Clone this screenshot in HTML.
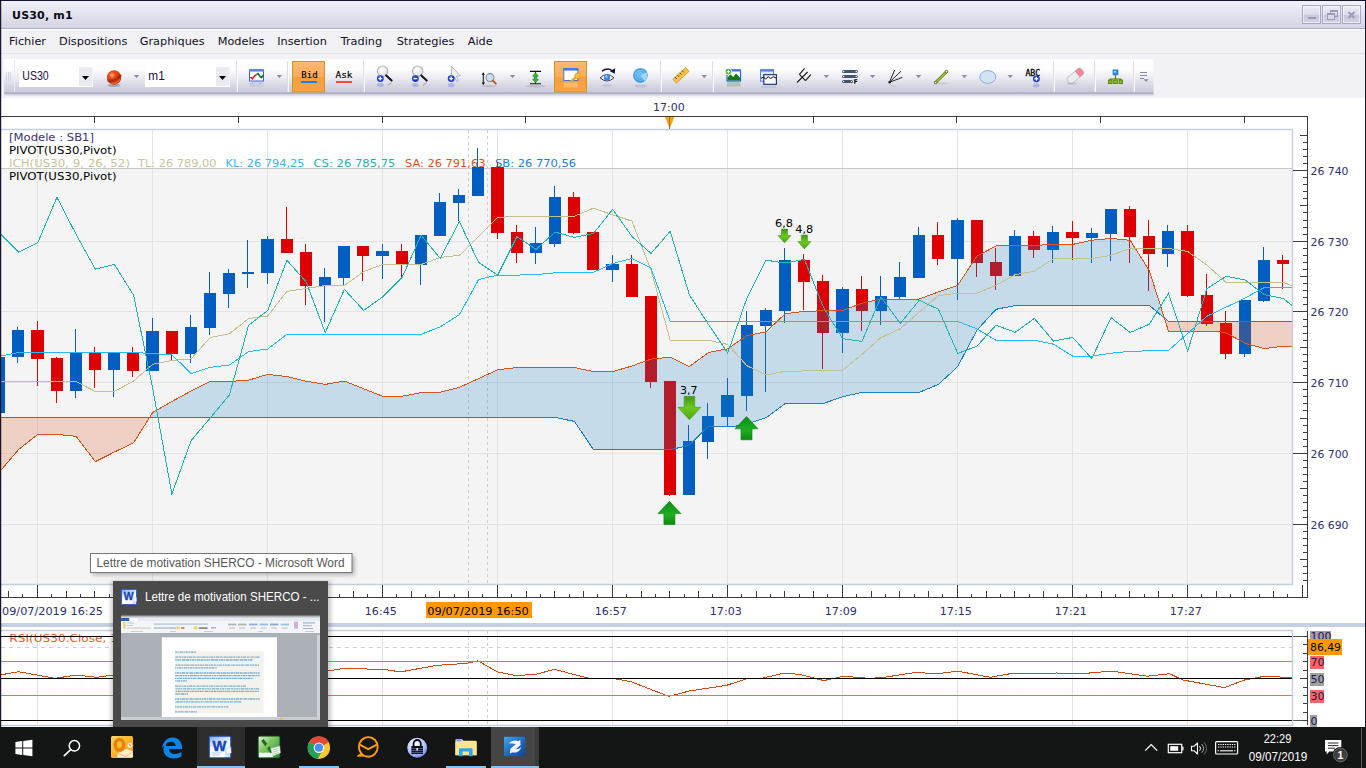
<!DOCTYPE html><html lang="fr"><head><meta charset="utf-8"><title>US30, m1</title><style>
*{box-sizing:border-box;margin:0;padding:0}
html,body{width:1366px;height:768px;overflow:hidden;background:#fff}
body{position:relative;font-family:"DejaVu Sans","Liberation Sans",sans-serif;font-size:11px;color:#000}
.abs{position:absolute}
#frameT{left:0;top:0;width:1366px;height:1px;background:#15152b}
#frameL{left:0;top:0;width:1px;height:728px;background:#15152b;box-shadow:1px 0 0 rgba(21,21,43,.22)}
#frameR{left:1365px;top:0;width:1px;height:728px;background:#15152b}
#title{left:1px;top:1px;width:1364px;height:28px;background:linear-gradient(#f1f1f8,#e4e4ef 45%,#d3d3e3);border-bottom:1px solid #a9adc9}
#title b{position:absolute;left:11px;top:8px;font-size:11px;font-weight:bold;color:#0a0a14;white-space:nowrap;letter-spacing:0.2px}
.wb{position:absolute;top:4px;width:19px;height:19px;border:1px solid #a6a8c6;background:linear-gradient(#ececf6,#dcdcec 50%,#c6c6dc 52%,#d2d2e4);box-shadow:inset 0 0 0 1px rgba(255,255,255,.55)}
#menu{left:1px;top:29px;width:1364px;height:25px;background:#f1f1f6;border-top:1px solid #fff;border-bottom:1px solid #e4e4ec}
#menu span{position:absolute;top:5px;font-size:11.3px;color:#14101c;white-space:nowrap}
#tbarea{left:1px;top:54px;width:1364px;height:44px;background:#f1f1f6}
#toolbar{left:4px;top:58px;width:1150px;height:35px;background:linear-gradient(#ffffff,#f4f4f9 40%,#dcdce8 75%,#cdcddd);border-radius:2px;box-shadow:0 1px 0 #9c9cb8,0 2px 2px rgba(120,120,160,.45);}
</style></head><body>
<svg id="chart" width="1366" height="768" viewBox="0 0 1366 768" style="position:absolute;left:0;top:0">
<defs>
<clipPath id="cpB"><rect x="149.6" y="130" width="1014.7" height="455"/></clipPath>
<clipPath id="cpR"><rect x="1" y="130" width="148.6" height="455"/><rect x="1164.2" y="130" width="128.3" height="455"/></clipPath>
<clipPath id="cpPanel"><rect x="1" y="130" width="1291.5" height="455"/></clipPath>
<clipPath id="cpRsi"><rect x="1" y="631" width="1291.5" height="94"/></clipPath>
<linearGradient id="gDn" x1="0" y1="0" x2="0" y2="1"><stop offset="0" stop-color="#3d9a12"/><stop offset="0.5" stop-color="#6cc81e"/><stop offset="1" stop-color="#4aa612"/></linearGradient>
<linearGradient id="gUp" x1="0" y1="0" x2="0" y2="1"><stop offset="0" stop-color="#0c8f14"/><stop offset="0.6" stop-color="#1fae22"/><stop offset="1" stop-color="#0a8a10"/></linearGradient>
</defs>
<rect x="1" y="130" width="1292" height="39" fill="#ffffff"/>
<rect x="1" y="169" width="1292" height="416" fill="#f4f4f4"/>
<g stroke="#e3e3e3" stroke-width="1" shape-rendering="crispEdges">
<line x1="37.5" y1="130" x2="37.5" y2="585"/>
<line x1="152.5" y1="130" x2="152.5" y2="585"/>
<line x1="267.5" y1="130" x2="267.5" y2="585"/>
<line x1="382.5" y1="130" x2="382.5" y2="585"/>
<line x1="497.5" y1="130" x2="497.5" y2="585"/>
<line x1="612.5" y1="130" x2="612.5" y2="585"/>
<line x1="727.5" y1="130" x2="727.5" y2="585"/>
<line x1="842.5" y1="130" x2="842.5" y2="585"/>
<line x1="957.5" y1="130" x2="957.5" y2="585"/>
<line x1="1072.5" y1="130" x2="1072.5" y2="585"/>
<line x1="1187.5" y1="130" x2="1187.5" y2="585"/>
<line x1="1" y1="241.5" x2="1293" y2="241.5"/>
<line x1="1" y1="311.5" x2="1293" y2="311.5"/>
<line x1="1" y1="382.5" x2="1293" y2="382.5"/>
<line x1="1" y1="453.5" x2="1293" y2="453.5"/>
<line x1="1" y1="524.5" x2="1293" y2="524.5"/>
</g>
<line x1="1" y1="168.5" x2="1293" y2="168.5" stroke="#c8c8c8" shape-rendering="crispEdges"/>
<g stroke="#d0d0d0" stroke-dasharray="3 3" shape-rendering="crispEdges"><line x1="468.5" y1="130" x2="468.5" y2="585"/><line x1="487.5" y1="130" x2="487.5" y2="585"/></g>
<g font-family="DejaVu Sans, Liberation Sans, sans-serif" font-size="11px">
<text x="9" y="141" fill="#3c3470" textLength="85" lengthAdjust="spacingAndGlyphs">[Modele : SB1]</text>
<text x="9" y="154" fill="#000" textLength="107.5" lengthAdjust="spacingAndGlyphs">PIVOT(US30,Pivot)</text>
<text x="9" y="167" fill="#c9c596" textLength="121" lengthAdjust="spacingAndGlyphs">ICH(US30, 9, 26, 52)</text>
<text x="138" y="167" fill="#c9c596" textLength="78.5" lengthAdjust="spacingAndGlyphs">TL: 26 789,00</text>
<text x="225.5" y="167" fill="#35b8f0" textLength="79" lengthAdjust="spacingAndGlyphs">KL: 26 794,25</text>
<text x="313.5" y="167" fill="#22b3b3" textLength="82" lengthAdjust="spacingAndGlyphs">CS: 26 785,75</text>
<text x="405" y="167" fill="#e2501c" textLength="80.5" lengthAdjust="spacingAndGlyphs">SA: 26 791,63</text>
<text x="495" y="167" fill="#2080d0" textLength="81" lengthAdjust="spacingAndGlyphs">SB: 26 770,56</text>
<text x="9" y="180" fill="#000" textLength="107.5" lengthAdjust="spacingAndGlyphs">PIVOT(US30,Pivot)</text>
</g>
<g clip-path="url(#cpPanel)">
<g shape-rendering="crispEdges">
<rect x="-2" y="357.2" width="1" height="55.7" fill="#005ec0"/>
<rect x="-7" y="357.2" width="12" height="55.7" fill="#005ec0"/>
<rect x="17" y="326.8" width="1" height="36.0" fill="#005ec0"/>
<rect x="12" y="330.0" width="12" height="26.6" fill="#005ec0"/>
<rect x="37" y="321.0" width="1" height="64.9" fill="#dc0000"/>
<rect x="31" y="330.0" width="13" height="28.7" fill="#dc0000"/>
<rect x="56" y="357.2" width="1" height="45.6" fill="#dc0000"/>
<rect x="51" y="358.1" width="12" height="32.9" fill="#dc0000"/>
<rect x="75" y="329.0" width="1" height="68.7" fill="#005ec0"/>
<rect x="70" y="352.9" width="12" height="38.1" fill="#005ec0"/>
<rect x="94" y="346.9" width="1" height="40.9" fill="#dc0000"/>
<rect x="89" y="352.9" width="12" height="17.1" fill="#dc0000"/>
<rect x="113" y="352.9" width="1" height="44.1" fill="#005ec0"/>
<rect x="108" y="352.9" width="12" height="17.1" fill="#005ec0"/>
<rect x="132" y="346.9" width="1" height="30.0" fill="#dc0000"/>
<rect x="127" y="352.9" width="12" height="18.0" fill="#dc0000"/>
<rect x="152" y="318.2" width="1" height="52.7" fill="#005ec0"/>
<rect x="146" y="331.1" width="13" height="39.8" fill="#005ec0"/>
<rect x="171" y="331.1" width="1" height="28.9" fill="#dc0000"/>
<rect x="166" y="331.1" width="12" height="22.7" fill="#dc0000"/>
<rect x="190" y="315.0" width="1" height="47.8" fill="#005ec0"/>
<rect x="185" y="327.0" width="12" height="26.8" fill="#005ec0"/>
<rect x="209" y="271.9" width="1" height="62.8" fill="#005ec0"/>
<rect x="204" y="292.9" width="12" height="34.9" fill="#005ec0"/>
<rect x="228" y="269.1" width="1" height="38.8" fill="#005ec0"/>
<rect x="223" y="272.8" width="12" height="21.0" fill="#005ec0"/>
<rect x="247" y="240.2" width="1" height="47.4" fill="#005ec0"/>
<rect x="242" y="272.0" width="12" height="1.8" fill="#005ec0"/>
<rect x="267" y="236.0" width="1" height="47.8" fill="#005ec0"/>
<rect x="261" y="239.1" width="13" height="33.8" fill="#005ec0"/>
<rect x="286" y="207.3" width="1" height="45.5" fill="#dc0000"/>
<rect x="281" y="239.1" width="12" height="13.7" fill="#dc0000"/>
<rect x="305" y="244.4" width="1" height="60.4" fill="#dc0000"/>
<rect x="300" y="252.1" width="12" height="33.7" fill="#dc0000"/>
<rect x="324" y="268.2" width="1" height="53.6" fill="#005ec0"/>
<rect x="319" y="277.0" width="12" height="8.8" fill="#005ec0"/>
<rect x="343" y="245.9" width="1" height="39.7" fill="#005ec0"/>
<rect x="338" y="245.9" width="12" height="31.9" fill="#005ec0"/>
<rect x="362" y="245.9" width="1" height="35.1" fill="#dc0000"/>
<rect x="357" y="245.9" width="12" height="9.9" fill="#dc0000"/>
<rect x="382" y="244.4" width="1" height="34.3" fill="#005ec0"/>
<rect x="376" y="251.0" width="13" height="4.8" fill="#005ec0"/>
<rect x="401" y="244.4" width="1" height="34.3" fill="#dc0000"/>
<rect x="396" y="251.0" width="12" height="13.1" fill="#dc0000"/>
<rect x="420" y="235.0" width="1" height="49.7" fill="#005ec0"/>
<rect x="415" y="235.0" width="12" height="30.0" fill="#005ec0"/>
<rect x="439" y="193.1" width="1" height="42.8" fill="#005ec0"/>
<rect x="434" y="202.1" width="12" height="33.8" fill="#005ec0"/>
<rect x="458" y="189.0" width="1" height="32.2" fill="#005ec0"/>
<rect x="453" y="195.0" width="12" height="7.9" fill="#005ec0"/>
<rect x="477" y="147.5" width="1" height="48.3" fill="#005ec0"/>
<rect x="472" y="166.9" width="12" height="28.9" fill="#005ec0"/>
<rect x="497" y="162.2" width="1" height="76.5" fill="#dc0000"/>
<rect x="491" y="166.9" width="13" height="65.8" fill="#dc0000"/>
<rect x="516" y="225.0" width="1" height="37.9" fill="#dc0000"/>
<rect x="511" y="232.0" width="12" height="20.8" fill="#dc0000"/>
<rect x="535" y="226.9" width="1" height="36.9" fill="#005ec0"/>
<rect x="530" y="243.2" width="12" height="9.6" fill="#005ec0"/>
<rect x="554" y="186.0" width="1" height="61.0" fill="#005ec0"/>
<rect x="549" y="196.9" width="12" height="46.9" fill="#005ec0"/>
<rect x="573" y="192.2" width="1" height="41.6" fill="#dc0000"/>
<rect x="568" y="196.9" width="12" height="35.8" fill="#dc0000"/>
<rect x="592" y="232.0" width="1" height="37.7" fill="#dc0000"/>
<rect x="587" y="232.0" width="12" height="37.7" fill="#dc0000"/>
<rect x="612" y="255.0" width="1" height="26.7" fill="#005ec0"/>
<rect x="606" y="264.0" width="13" height="6.0" fill="#005ec0"/>
<rect x="631" y="255.0" width="1" height="41.8" fill="#dc0000"/>
<rect x="626" y="264.0" width="12" height="32.8" fill="#dc0000"/>
<rect x="650" y="295.9" width="1" height="91.9" fill="#dc0000"/>
<rect x="645" y="295.9" width="12" height="85.7" fill="#dc0000"/>
<rect x="669" y="380.9" width="1" height="114.8" fill="#dc0000"/>
<rect x="664" y="380.9" width="12" height="113.8" fill="#dc0000"/>
<rect x="688" y="425.0" width="1" height="69.7" fill="#005ec0"/>
<rect x="683" y="440.9" width="12" height="53.8" fill="#005ec0"/>
<rect x="707" y="402.8" width="1" height="55.9" fill="#005ec0"/>
<rect x="702" y="416.0" width="12" height="25.8" fill="#005ec0"/>
<rect x="727" y="377.9" width="1" height="48.4" fill="#005ec0"/>
<rect x="721" y="395.0" width="13" height="21.9" fill="#005ec0"/>
<rect x="746" y="310.9" width="1" height="100.0" fill="#005ec0"/>
<rect x="741" y="325.0" width="12" height="70.7" fill="#005ec0"/>
<rect x="765" y="307.9" width="1" height="83.7" fill="#005ec0"/>
<rect x="760" y="310.0" width="12" height="15.9" fill="#005ec0"/>
<rect x="784" y="247.9" width="1" height="74.6" fill="#005ec0"/>
<rect x="779" y="260.0" width="12" height="50.9" fill="#005ec0"/>
<rect x="803" y="254.0" width="1" height="55.8" fill="#dc0000"/>
<rect x="798" y="260.0" width="12" height="22.0" fill="#dc0000"/>
<rect x="822" y="275.0" width="1" height="94.0" fill="#dc0000"/>
<rect x="817" y="280.9" width="12" height="51.9" fill="#dc0000"/>
<rect x="842" y="286.9" width="1" height="66.0" fill="#005ec0"/>
<rect x="836" y="289.1" width="13" height="43.7" fill="#005ec0"/>
<rect x="861" y="276.0" width="1" height="54.9" fill="#dc0000"/>
<rect x="856" y="289.1" width="12" height="21.6" fill="#dc0000"/>
<rect x="880" y="276.0" width="1" height="48.7" fill="#005ec0"/>
<rect x="875" y="296.0" width="12" height="14.7" fill="#005ec0"/>
<rect x="899" y="261.9" width="1" height="37.1" fill="#005ec0"/>
<rect x="894" y="276.9" width="12" height="20.1" fill="#005ec0"/>
<rect x="918" y="227.2" width="1" height="50.6" fill="#005ec0"/>
<rect x="913" y="234.9" width="12" height="42.9" fill="#005ec0"/>
<rect x="937" y="221.9" width="1" height="43.2" fill="#dc0000"/>
<rect x="932" y="234.9" width="12" height="24.0" fill="#dc0000"/>
<rect x="957" y="217.8" width="1" height="82.2" fill="#005ec0"/>
<rect x="951" y="219.9" width="13" height="39.0" fill="#005ec0"/>
<rect x="976" y="219.9" width="1" height="57.0" fill="#dc0000"/>
<rect x="971" y="219.9" width="12" height="42.9" fill="#dc0000"/>
<rect x="995" y="247.8" width="1" height="42.2" fill="#dc0000"/>
<rect x="990" y="261.9" width="12" height="14.1" fill="#dc0000"/>
<rect x="1014" y="230.0" width="1" height="46.0" fill="#005ec0"/>
<rect x="1009" y="236.0" width="12" height="40.0" fill="#005ec0"/>
<rect x="1033" y="230.9" width="1" height="27.2" fill="#dc0000"/>
<rect x="1028" y="236.0" width="12" height="14.1" fill="#dc0000"/>
<rect x="1052" y="226.0" width="1" height="36.8" fill="#005ec0"/>
<rect x="1047" y="231.8" width="12" height="18.2" fill="#005ec0"/>
<rect x="1072" y="220.9" width="1" height="39.0" fill="#dc0000"/>
<rect x="1066" y="231.8" width="13" height="6.1" fill="#dc0000"/>
<rect x="1091" y="228.0" width="1" height="34.8" fill="#005ec0"/>
<rect x="1086" y="232.9" width="12" height="5.0" fill="#005ec0"/>
<rect x="1110" y="208.8" width="1" height="52.1" fill="#005ec0"/>
<rect x="1105" y="208.8" width="12" height="25.3" fill="#005ec0"/>
<rect x="1129" y="205.9" width="1" height="56.9" fill="#dc0000"/>
<rect x="1124" y="208.8" width="12" height="28.1" fill="#dc0000"/>
<rect x="1148" y="220.0" width="1" height="70.7" fill="#dc0000"/>
<rect x="1143" y="235.9" width="12" height="17.9" fill="#dc0000"/>
<rect x="1167" y="225.1" width="1" height="41.8" fill="#005ec0"/>
<rect x="1162" y="230.9" width="12" height="22.9" fill="#005ec0"/>
<rect x="1187" y="225.1" width="1" height="71.8" fill="#dc0000"/>
<rect x="1181" y="230.9" width="13" height="65.1" fill="#dc0000"/>
<rect x="1206" y="274.4" width="1" height="51.4" fill="#dc0000"/>
<rect x="1201" y="295.0" width="12" height="28.7" fill="#dc0000"/>
<rect x="1225" y="311.1" width="1" height="47.7" fill="#dc0000"/>
<rect x="1220" y="323.0" width="12" height="30.8" fill="#dc0000"/>
<rect x="1244" y="300.2" width="1" height="56.4" fill="#005ec0"/>
<rect x="1239" y="300.2" width="12" height="53.6" fill="#005ec0"/>
<rect x="1263" y="247.2" width="1" height="54.8" fill="#005ec0"/>
<rect x="1258" y="260.0" width="12" height="40.7" fill="#005ec0"/>
<rect x="1282" y="255.1" width="1" height="33.7" fill="#dc0000"/>
<rect x="1277" y="260.0" width="12" height="3.9" fill="#dc0000"/>
</g>
<polygon points="0.0,471.3 18.6,449.5 37.8,434.4 56.9,434.4 76.1,436.3 95.3,461.6 114.4,452.0 133.6,442.8 152.7,412.5 171.9,401.5 191.1,391.0 210.2,381.4 229.4,381.4 248.6,380.2 267.7,374.4 286.9,376.6 306.1,381.2 325.2,384.4 344.4,381.1 363.6,388.7 382.7,396.3 401.9,396.3 421.1,392.6 440.2,392.1 459.4,387.3 478.6,378.6 497.7,369.8 516.9,367.5 574.4,367.5 593.5,371.6 612.7,371.6 631.9,366.0 651.0,359.1 670.2,357.2 689.4,366.6 708.5,352.5 727.7,348.8 746.9,335.6 766.0,331.9 785.2,313.7 804.4,311.3 823.5,310.8 842.7,310.5 861.9,303.2 881.0,299.0 919.3,299.0 938.5,291.9 957.7,285.3 976.8,256.3 996.0,245.9 1072.7,244.4 1091.8,240.2 1111.0,238.4 1130.2,240.3 1149.3,270.6 1168.5,331.2 1206.8,331.2 1216.0,331.2 1226.0,332.8 1245.2,343.4 1264.3,348.5 1283.5,346.3 1292.5,346.3 1292.5,321.3 1168.5,321.3 1149.3,305.4 1015.2,305.5 996.0,309.3 976.8,330.4 957.7,366.6 938.5,384.4 919.3,392.3 861.9,392.3 842.7,396.8 823.5,403.4 785.2,403.4 766.0,417.8 746.9,424.0 735.0,426.3 708.5,426.3 689.4,445.0 680.6,447.3 670.2,449.7 593.5,449.6 574.4,421.4 555.2,417.5 0.0,417.5" fill="#1e83c8" fill-opacity="0.22" clip-path="url(#cpB)"/>
<polygon points="0.0,471.3 18.6,449.5 37.8,434.4 56.9,434.4 76.1,436.3 95.3,461.6 114.4,452.0 133.6,442.8 152.7,412.5 171.9,401.5 191.1,391.0 210.2,381.4 229.4,381.4 248.6,380.2 267.7,374.4 286.9,376.6 306.1,381.2 325.2,384.4 344.4,381.1 363.6,388.7 382.7,396.3 401.9,396.3 421.1,392.6 440.2,392.1 459.4,387.3 478.6,378.6 497.7,369.8 516.9,367.5 574.4,367.5 593.5,371.6 612.7,371.6 631.9,366.0 651.0,359.1 670.2,357.2 689.4,366.6 708.5,352.5 727.7,348.8 746.9,335.6 766.0,331.9 785.2,313.7 804.4,311.3 823.5,310.8 842.7,310.5 861.9,303.2 881.0,299.0 919.3,299.0 938.5,291.9 957.7,285.3 976.8,256.3 996.0,245.9 1072.7,244.4 1091.8,240.2 1111.0,238.4 1130.2,240.3 1149.3,270.6 1168.5,331.2 1206.8,331.2 1216.0,331.2 1226.0,332.8 1245.2,343.4 1264.3,348.5 1283.5,346.3 1292.5,346.3 1292.5,321.3 1168.5,321.3 1149.3,305.4 1015.2,305.5 996.0,309.3 976.8,330.4 957.7,366.6 938.5,384.4 919.3,392.3 861.9,392.3 842.7,396.8 823.5,403.4 785.2,403.4 766.0,417.8 746.9,424.0 735.0,426.3 708.5,426.3 689.4,445.0 680.6,447.3 670.2,449.7 593.5,449.6 574.4,421.4 555.2,417.5 0.0,417.5" fill="#e0501a" fill-opacity="0.22" clip-path="url(#cpR)"/>
<g shape-rendering="crispEdges">
<polyline points="0.0,417.5 555.2,417.5 574.4,421.4 593.5,449.6 670.2,449.7 680.6,447.3 689.4,445.0 708.5,426.3 735.0,426.3 746.9,424.0 766.0,417.8 785.2,403.4 823.5,403.4 842.7,396.8 861.9,392.3 919.3,392.3 938.5,384.4 957.7,366.6 976.8,330.4 996.0,309.3 1015.2,305.5 1149.3,305.4 1168.5,321.3 1292.5,321.3" fill="none" stroke="#1a80c4" stroke-width="1"/>
<polyline points="0.0,471.3 18.6,449.5 37.8,434.4 56.9,434.4 76.1,436.3 95.3,461.6 114.4,452.0 133.6,442.8 152.7,412.5 171.9,401.5 191.1,391.0 210.2,381.4 229.4,381.4 248.6,380.2 267.7,374.4 286.9,376.6 306.1,381.2 325.2,384.4 344.4,381.1 363.6,388.7 382.7,396.3 401.9,396.3 421.1,392.6 440.2,392.1 459.4,387.3 478.6,378.6 497.7,369.8 516.9,367.5 574.4,367.5 593.5,371.6 612.7,371.6 631.9,366.0 651.0,359.1 670.2,357.2 689.4,366.6 708.5,352.5 727.7,348.8 746.9,335.6 766.0,331.9 785.2,313.7 804.4,311.3 823.5,310.8 842.7,310.5 861.9,303.2 881.0,299.0 919.3,299.0 938.5,291.9 957.7,285.3 976.8,256.3 996.0,245.9 1072.7,244.4 1091.8,240.2 1111.0,238.4 1130.2,240.3 1149.3,270.6 1168.5,331.2 1206.8,331.2 1216.0,331.2 1226.0,332.8 1245.2,343.4 1264.3,348.5 1283.5,346.3 1292.5,346.3" fill="none" stroke="#dd5018" stroke-width="1"/>
<polyline points="0.0,381.6 76.1,381.6 95.3,391.5 114.4,391.5 133.6,381.0 152.7,364.3 171.9,360.4 191.1,358.9 210.2,337.5 229.4,333.8 248.6,318.5 267.7,316.0 286.9,291.3 306.1,288.5 325.2,285.6 344.4,285.6 363.6,271.6 382.7,264.5 421.1,264.5 440.2,257.5 459.4,255.3 478.6,236.5 497.7,217.5 516.9,216.2 574.4,216.2 593.5,208.2 612.7,214.8 631.9,221.1 651.0,270.0 670.2,340.3 708.5,340.3 727.7,344.5 746.9,365.7 766.0,375.0 785.2,371.3 842.7,370.3 861.9,354.4 881.0,337.6 900.2,328.7 919.3,312.0 938.5,295.6 957.7,293.2 976.8,293.2 996.0,285.3 1015.2,274.6 1034.3,271.3 1053.5,258.5 1091.8,258.5 1111.0,255.3 1130.2,248.5 1168.5,248.5 1187.7,251.5 1206.8,265.0 1226.0,282.3 1283.5,282.3 1292.5,286.2" fill="none" stroke="#c4c08c" stroke-width="1"/>
<polyline points="0.0,356.3 18.6,352.4 133.6,352.4 171.9,354.8 191.1,373.5 210.2,367.4 229.4,365.0 248.6,351.6 267.7,349.0 286.9,334.3 421.1,334.3 440.2,326.9 459.4,314.7 478.6,279.5 497.7,275.1 516.9,275.1 536.0,274.5 555.2,272.8 593.5,272.3 612.7,263.5 631.9,258.5 651.0,268.0 670.2,321.4 957.7,321.5 976.8,328.8 996.0,340.3 1034.3,340.3 1053.5,344.2 1072.7,356.2 1091.8,356.2 1111.0,353.2 1130.2,351.3 1149.3,350.8 1168.5,350.4 1187.7,333.5 1206.8,316.3 1226.0,307.2 1245.2,298.0 1264.3,287.5 1292.5,287.5" fill="none" stroke="#22bcfc" stroke-width="1"/>
<polyline points="0.0,233.5 18.6,252.2 37.8,242.8 56.9,197.3 76.1,234.4 95.3,269.1 114.4,264.4 133.6,295.3 152.7,388.5 171.9,494.0 191.1,440.6 210.2,418.0 229.4,395.0 248.6,325.3 267.7,310.5 286.9,260.3 306.1,281.9 325.2,332.5 344.4,289.4 363.6,310.4 382.7,296.9 401.9,277.8 421.1,235.2 440.2,258.4 459.4,221.6 478.6,262.4 497.7,275.1 516.9,236.6 536.0,249.4 555.2,232.1 574.4,237.4 593.5,233.5 612.7,209.3 631.9,236.4 651.0,253.4 670.2,231.3 689.4,295.0 708.5,324.4 727.7,353.1 746.9,298.1 766.0,260.2 785.2,263.0 804.4,259.4 823.5,307.5 842.7,338.6 861.9,341.5 881.0,297.0 900.2,323.4 919.3,300.3 938.5,309.3 957.7,353.4 976.8,346.3 996.0,325.2 1015.2,332.3 1034.3,318.4 1053.5,341.1 1072.7,337.4 1091.8,358.5 1111.0,317.7 1130.2,332.5 1149.3,324.2 1168.5,293.4 1187.7,351.0 1206.8,288.8 1226.0,276.3 1245.2,280.0 1264.3,294.7 1283.5,298.6 1292.5,305.9" fill="none" stroke="#1fb2b2" stroke-width="1"/>
</g>
<path d="M684.2,396.3h10.5v11h6.2l-11.5,12.4l-11.5,-12.4h6.2z" fill="url(#gDn)" stroke="#3c9a10" stroke-width="0.6"/>
<path d="M781.5,229.1h6v6.5h3.5l-6.5,7.3l-6.5,-7.3h3.5z" fill="url(#gDn)" stroke="#3c9a10" stroke-width="0.6"/>
<path d="M801.4,235.1h6v6.5h3.5l-6.5,7.3l-6.5,-7.3h3.5z" fill="url(#gDn)" stroke="#3c9a10" stroke-width="0.6"/>
<path d="M746.5,416.5l11.5,12.3h-6.0v11h-11v-11h-6.0z" fill="url(#gUp)" stroke="#0a7a10" stroke-width="0.6"/>
<path d="M669.4,501.3l11.5,12.3h-6.0v11h-11v-11h-6.0z" fill="url(#gUp)" stroke="#0a7a10" stroke-width="0.6"/>
<g font-family="DejaVu Sans, Liberation Sans, sans-serif" font-size="11px" fill="#000"><text x="680" y="394.2" textLength="17.5" lengthAdjust="spacingAndGlyphs">3,7</text><text x="775" y="227.3" textLength="18" lengthAdjust="spacingAndGlyphs">6,8</text><text x="795.2" y="233.3" textLength="18" lengthAdjust="spacingAndGlyphs">4,8</text></g>
</g>
<path d="M1,129.5H1292.5V584.5H1" fill="none" stroke="#c4cfe0" stroke-width="1.4"/>
<g stroke="#3c3c3c" stroke-width="1" shape-rendering="crispEdges">
<line x1="1" y1="116.5" x2="1308" y2="116.5"/>
<line x1="1307.5" y1="116" x2="1307.5" y2="597"/>
<line x1="1" y1="597.5" x2="1308" y2="597.5"/>
<line x1="94.5" y1="117" x2="94.5" y2="123"/>
<line x1="238.5" y1="117" x2="238.5" y2="123"/>
<line x1="382.5" y1="117" x2="382.5" y2="123"/>
<line x1="525.5" y1="117" x2="525.5" y2="123"/>
<line x1="669.5" y1="117" x2="669.5" y2="123"/>
<line x1="813.5" y1="117" x2="813.5" y2="123"/>
<line x1="956.5" y1="117" x2="956.5" y2="123"/>
<line x1="1100.5" y1="117" x2="1100.5" y2="123"/>
<line x1="1244.5" y1="117" x2="1244.5" y2="123"/>
<line x1="1300" y1="135.5" x2="1307" y2="135.5"/>
<line x1="1303" y1="142.5" x2="1307" y2="142.5"/>
<line x1="1303" y1="149.5" x2="1307" y2="149.5"/>
<line x1="1303" y1="156.5" x2="1307" y2="156.5"/>
<line x1="1303" y1="163.5" x2="1307" y2="163.5"/>
<line x1="1293" y1="170.5" x2="1307" y2="170.5"/>
<line x1="1303" y1="177.5" x2="1307" y2="177.5"/>
<line x1="1303" y1="184.5" x2="1307" y2="184.5"/>
<line x1="1303" y1="191.5" x2="1307" y2="191.5"/>
<line x1="1303" y1="198.5" x2="1307" y2="198.5"/>
<line x1="1300" y1="205.5" x2="1307" y2="205.5"/>
<line x1="1303" y1="212.5" x2="1307" y2="212.5"/>
<line x1="1303" y1="220.5" x2="1307" y2="220.5"/>
<line x1="1303" y1="227.5" x2="1307" y2="227.5"/>
<line x1="1303" y1="234.5" x2="1307" y2="234.5"/>
<line x1="1293" y1="241.5" x2="1307" y2="241.5"/>
<line x1="1303" y1="248.5" x2="1307" y2="248.5"/>
<line x1="1303" y1="255.5" x2="1307" y2="255.5"/>
<line x1="1303" y1="262.5" x2="1307" y2="262.5"/>
<line x1="1303" y1="269.5" x2="1307" y2="269.5"/>
<line x1="1300" y1="276.5" x2="1307" y2="276.5"/>
<line x1="1303" y1="283.5" x2="1307" y2="283.5"/>
<line x1="1303" y1="290.5" x2="1307" y2="290.5"/>
<line x1="1303" y1="297.5" x2="1307" y2="297.5"/>
<line x1="1303" y1="304.5" x2="1307" y2="304.5"/>
<line x1="1293" y1="311.5" x2="1307" y2="311.5"/>
<line x1="1303" y1="319.5" x2="1307" y2="319.5"/>
<line x1="1303" y1="326.5" x2="1307" y2="326.5"/>
<line x1="1303" y1="333.5" x2="1307" y2="333.5"/>
<line x1="1303" y1="340.5" x2="1307" y2="340.5"/>
<line x1="1300" y1="347.5" x2="1307" y2="347.5"/>
<line x1="1303" y1="354.5" x2="1307" y2="354.5"/>
<line x1="1303" y1="361.5" x2="1307" y2="361.5"/>
<line x1="1303" y1="368.5" x2="1307" y2="368.5"/>
<line x1="1303" y1="375.5" x2="1307" y2="375.5"/>
<line x1="1293" y1="382.5" x2="1307" y2="382.5"/>
<line x1="1303" y1="389.5" x2="1307" y2="389.5"/>
<line x1="1303" y1="396.5" x2="1307" y2="396.5"/>
<line x1="1303" y1="403.5" x2="1307" y2="403.5"/>
<line x1="1303" y1="410.5" x2="1307" y2="410.5"/>
<line x1="1300" y1="418.5" x2="1307" y2="418.5"/>
<line x1="1303" y1="425.5" x2="1307" y2="425.5"/>
<line x1="1303" y1="432.5" x2="1307" y2="432.5"/>
<line x1="1303" y1="439.5" x2="1307" y2="439.5"/>
<line x1="1303" y1="446.5" x2="1307" y2="446.5"/>
<line x1="1293" y1="453.5" x2="1307" y2="453.5"/>
<line x1="1303" y1="460.5" x2="1307" y2="460.5"/>
<line x1="1303" y1="467.5" x2="1307" y2="467.5"/>
<line x1="1303" y1="474.5" x2="1307" y2="474.5"/>
<line x1="1303" y1="481.5" x2="1307" y2="481.5"/>
<line x1="1300" y1="488.5" x2="1307" y2="488.5"/>
<line x1="1303" y1="495.5" x2="1307" y2="495.5"/>
<line x1="1303" y1="502.5" x2="1307" y2="502.5"/>
<line x1="1303" y1="510.5" x2="1307" y2="510.5"/>
<line x1="1303" y1="517.5" x2="1307" y2="517.5"/>
<line x1="1293" y1="524.5" x2="1307" y2="524.5"/>
<line x1="1303" y1="531.5" x2="1307" y2="531.5"/>
<line x1="1303" y1="538.5" x2="1307" y2="538.5"/>
<line x1="1303" y1="545.5" x2="1307" y2="545.5"/>
<line x1="1303" y1="552.5" x2="1307" y2="552.5"/>
<line x1="1300" y1="559.5" x2="1307" y2="559.5"/>
<line x1="1303" y1="566.5" x2="1307" y2="566.5"/>
<line x1="1303" y1="573.5" x2="1307" y2="573.5"/>
<line x1="1303" y1="580.5" x2="1307" y2="580.5"/>
<line x1="8.5" y1="591" x2="8.5" y2="597"/>
<line x1="22.5" y1="594" x2="22.5" y2="597"/>
<line x1="37.5" y1="585" x2="37.5" y2="597"/>
<line x1="51.5" y1="594" x2="51.5" y2="597"/>
<line x1="66.5" y1="591" x2="66.5" y2="597"/>
<line x1="80.5" y1="594" x2="80.5" y2="597"/>
<line x1="94.5" y1="591" x2="94.5" y2="597"/>
<line x1="109.5" y1="594" x2="109.5" y2="597"/>
<line x1="123.5" y1="591" x2="123.5" y2="597"/>
<line x1="137.5" y1="594" x2="137.5" y2="597"/>
<line x1="152.5" y1="585" x2="152.5" y2="597"/>
<line x1="166.5" y1="594" x2="166.5" y2="597"/>
<line x1="181.5" y1="591" x2="181.5" y2="597"/>
<line x1="195.5" y1="594" x2="195.5" y2="597"/>
<line x1="209.5" y1="591" x2="209.5" y2="597"/>
<line x1="224.5" y1="594" x2="224.5" y2="597"/>
<line x1="238.5" y1="591" x2="238.5" y2="597"/>
<line x1="252.5" y1="594" x2="252.5" y2="597"/>
<line x1="267.5" y1="585" x2="267.5" y2="597"/>
<line x1="281.5" y1="594" x2="281.5" y2="597"/>
<line x1="296.5" y1="591" x2="296.5" y2="597"/>
<line x1="310.5" y1="594" x2="310.5" y2="597"/>
<line x1="324.5" y1="591" x2="324.5" y2="597"/>
<line x1="339.5" y1="594" x2="339.5" y2="597"/>
<line x1="353.5" y1="591" x2="353.5" y2="597"/>
<line x1="367.5" y1="594" x2="367.5" y2="597"/>
<line x1="382.5" y1="585" x2="382.5" y2="597"/>
<line x1="396.5" y1="594" x2="396.5" y2="597"/>
<line x1="411.5" y1="591" x2="411.5" y2="597"/>
<line x1="425.5" y1="594" x2="425.5" y2="597"/>
<line x1="439.5" y1="591" x2="439.5" y2="597"/>
<line x1="454.5" y1="594" x2="454.5" y2="597"/>
<line x1="468.5" y1="591" x2="468.5" y2="597"/>
<line x1="482.5" y1="594" x2="482.5" y2="597"/>
<line x1="497.5" y1="585" x2="497.5" y2="597"/>
<line x1="511.5" y1="594" x2="511.5" y2="597"/>
<line x1="526.5" y1="591" x2="526.5" y2="597"/>
<line x1="540.5" y1="594" x2="540.5" y2="597"/>
<line x1="554.5" y1="591" x2="554.5" y2="597"/>
<line x1="569.5" y1="594" x2="569.5" y2="597"/>
<line x1="583.5" y1="591" x2="583.5" y2="597"/>
<line x1="597.5" y1="594" x2="597.5" y2="597"/>
<line x1="612.5" y1="585" x2="612.5" y2="597"/>
<line x1="626.5" y1="594" x2="626.5" y2="597"/>
<line x1="641.5" y1="591" x2="641.5" y2="597"/>
<line x1="655.5" y1="594" x2="655.5" y2="597"/>
<line x1="669.5" y1="591" x2="669.5" y2="597"/>
<line x1="684.5" y1="594" x2="684.5" y2="597"/>
<line x1="698.5" y1="591" x2="698.5" y2="597"/>
<line x1="712.5" y1="594" x2="712.5" y2="597"/>
<line x1="727.5" y1="585" x2="727.5" y2="597"/>
<line x1="741.5" y1="594" x2="741.5" y2="597"/>
<line x1="756.5" y1="591" x2="756.5" y2="597"/>
<line x1="770.5" y1="594" x2="770.5" y2="597"/>
<line x1="784.5" y1="591" x2="784.5" y2="597"/>
<line x1="799.5" y1="594" x2="799.5" y2="597"/>
<line x1="813.5" y1="591" x2="813.5" y2="597"/>
<line x1="827.5" y1="594" x2="827.5" y2="597"/>
<line x1="842.5" y1="585" x2="842.5" y2="597"/>
<line x1="856.5" y1="594" x2="856.5" y2="597"/>
<line x1="871.5" y1="591" x2="871.5" y2="597"/>
<line x1="885.5" y1="594" x2="885.5" y2="597"/>
<line x1="899.5" y1="591" x2="899.5" y2="597"/>
<line x1="914.5" y1="594" x2="914.5" y2="597"/>
<line x1="928.5" y1="591" x2="928.5" y2="597"/>
<line x1="942.5" y1="594" x2="942.5" y2="597"/>
<line x1="957.5" y1="585" x2="957.5" y2="597"/>
<line x1="971.5" y1="594" x2="971.5" y2="597"/>
<line x1="986.5" y1="591" x2="986.5" y2="597"/>
<line x1="1000.5" y1="594" x2="1000.5" y2="597"/>
<line x1="1014.5" y1="591" x2="1014.5" y2="597"/>
<line x1="1029.5" y1="594" x2="1029.5" y2="597"/>
<line x1="1043.5" y1="591" x2="1043.5" y2="597"/>
<line x1="1057.5" y1="594" x2="1057.5" y2="597"/>
<line x1="1072.5" y1="585" x2="1072.5" y2="597"/>
<line x1="1086.5" y1="594" x2="1086.5" y2="597"/>
<line x1="1101.5" y1="591" x2="1101.5" y2="597"/>
<line x1="1115.5" y1="594" x2="1115.5" y2="597"/>
<line x1="1129.5" y1="591" x2="1129.5" y2="597"/>
<line x1="1144.5" y1="594" x2="1144.5" y2="597"/>
<line x1="1158.5" y1="591" x2="1158.5" y2="597"/>
<line x1="1172.5" y1="594" x2="1172.5" y2="597"/>
<line x1="1187.5" y1="585" x2="1187.5" y2="597"/>
<line x1="1201.5" y1="594" x2="1201.5" y2="597"/>
<line x1="1216.5" y1="591" x2="1216.5" y2="597"/>
<line x1="1230.5" y1="594" x2="1230.5" y2="597"/>
<line x1="1244.5" y1="591" x2="1244.5" y2="597"/>
<line x1="1259.5" y1="594" x2="1259.5" y2="597"/>
<line x1="1273.5" y1="591" x2="1273.5" y2="597"/>
<line x1="1287.5" y1="594" x2="1287.5" y2="597"/>
<line x1="1302.5" y1="585" x2="1302.5" y2="597"/>
</g>
<g font-family="DejaVu Sans, Liberation Sans, sans-serif" font-size="11px" fill="#2f2f6a">
<text x="1310.5" y="174.7" textLength="38" lengthAdjust="spacingAndGlyphs">26 740</text>
<text x="1310.5" y="246.0" textLength="38" lengthAdjust="spacingAndGlyphs">26 730</text>
<text x="1310.5" y="316.0" textLength="38" lengthAdjust="spacingAndGlyphs">26 720</text>
<text x="1310.5" y="387.0" textLength="38" lengthAdjust="spacingAndGlyphs">26 710</text>
<text x="1310.5" y="457.8" textLength="38" lengthAdjust="spacingAndGlyphs">26 700</text>
<text x="1310.5" y="529.0" textLength="38" lengthAdjust="spacingAndGlyphs">26 690</text>
<text x="652.9" y="111" textLength="31.8" lengthAdjust="spacingAndGlyphs">17:00</text>
<text x="2" y="615" textLength="101" lengthAdjust="spacingAndGlyphs">09/07/2019 16:25</text>
<text x="364.8" y="615" textLength="32" lengthAdjust="spacingAndGlyphs">16:45</text>
<text x="594.8" y="615" textLength="32" lengthAdjust="spacingAndGlyphs">16:57</text>
<text x="709.8" y="615" textLength="32" lengthAdjust="spacingAndGlyphs">17:03</text>
<text x="824.8" y="615" textLength="32" lengthAdjust="spacingAndGlyphs">17:09</text>
<text x="939.8" y="615" textLength="32" lengthAdjust="spacingAndGlyphs">17:15</text>
<text x="1054.8" y="615" textLength="32" lengthAdjust="spacingAndGlyphs">17:21</text>
<text x="1169.8" y="615" textLength="32" lengthAdjust="spacingAndGlyphs">17:27</text>
</g>
<rect x="426" y="602" width="106" height="16" fill="#ff9900"/>
<text x="427.3" y="615" font-family="DejaVu Sans, Liberation Sans, sans-serif" font-size="11px" fill="#000" textLength="101.5" lengthAdjust="spacingAndGlyphs">09/07/2019 16:50</text>
<path d="M665,117h9.4l-4.7,11.5z" fill="#f9a21c"/><line x1="669.5" y1="117" x2="669.5" y2="129" stroke="#b06a00" stroke-width="1" shape-rendering="crispEdges"/>
<rect x="0" y="623" width="1365" height="4" fill="#c3d0e1"/>
<rect x="1" y="631" width="1292" height="94" fill="#fff"/>
<g stroke="#e3e3e3" stroke-width="1" shape-rendering="crispEdges">
<line x1="37.5" y1="631" x2="37.5" y2="725"/>
<line x1="152.5" y1="631" x2="152.5" y2="725"/>
<line x1="267.5" y1="631" x2="267.5" y2="725"/>
<line x1="382.5" y1="631" x2="382.5" y2="725"/>
<line x1="497.5" y1="631" x2="497.5" y2="725"/>
<line x1="612.5" y1="631" x2="612.5" y2="725"/>
<line x1="727.5" y1="631" x2="727.5" y2="725"/>
<line x1="842.5" y1="631" x2="842.5" y2="725"/>
<line x1="957.5" y1="631" x2="957.5" y2="725"/>
<line x1="1072.5" y1="631" x2="1072.5" y2="725"/>
<line x1="1187.5" y1="631" x2="1187.5" y2="725"/>
</g>
<g stroke="#d0d0d0" stroke-dasharray="3 3" shape-rendering="crispEdges"><line x1="468.5" y1="631" x2="468.5" y2="725"/><line x1="487.5" y1="631" x2="487.5" y2="725"/></g>
<text x="9.3" y="641.7" font-family="DejaVu Sans, Liberation Sans, sans-serif" font-size="11px" fill="#ee5a1c" textLength="121" lengthAdjust="spacingAndGlyphs">RSI(US30.Close, 14)</text>
<polyline points="0.0,675.0 18.3,671.7 55.0,678.3 76.7,675.0 96.7,677.3 113.0,675.0 200.0,672.0 280.0,669.0 329.0,670.8 345.6,668.2 385.9,669.7 400.5,671.9 437.0,665.3 466.4,663.4 478.0,660.9 497.5,671.9 515.8,675.5 536.0,674.4 554.3,669.3 589.0,678.4 612.8,678.4 631.0,681.7 668.8,696.4 689.7,690.9 726.3,685.4 746.4,678.8 762.9,678.0 784.8,673.0 799.5,674.4 823.8,680.6 843.9,676.2 869.5,678.4 884.2,677.3 917.1,672.2 935.4,674.0 957.4,671.1 990.3,677.3 1014.1,673.0 1030.6,674.0 1056.2,673.0 1078.2,674.0 1111.1,671.1 1147.7,676.2 1169.7,673.7 1182.5,679.9 1224.6,687.6 1244.7,679.9 1264.9,676.2 1292.3,677.7" fill="none" stroke="#d44a0c" stroke-width="1" shape-rendering="crispEdges" clip-path="url(#cpRsi)"/>
<g shape-rendering="crispEdges">
<line x1="1" y1="647.5" x2="1293" y2="647.5" stroke="#cfcfcf" stroke-dasharray="4 4"/>
<line x1="1" y1="636.5" x2="1293" y2="636.5" stroke="#000"/>
<line x1="1" y1="661.5" x2="1293" y2="661.5" stroke="#f06868"/>
<line x1="1" y1="678.5" x2="1293" y2="678.5" stroke="#000"/>
<line x1="1" y1="695.5" x2="1293" y2="695.5" stroke="#f06868"/>
<line x1="1" y1="720.5" x2="1293" y2="720.5" stroke="#000"/>
<line x1="1293" y1="636.5" x2="1307" y2="636.5" stroke="#555"/>
<line x1="1293" y1="720.5" x2="1307" y2="720.5" stroke="#555"/>
</g>
<path d="M1,630.5H1292.5V725.5H1" fill="none" stroke="#c4cfe0" stroke-width="1.4"/>
<g stroke="#3c3c3c" stroke-width="1" shape-rendering="crispEdges">
<line x1="1307.5" y1="631" x2="1307.5" y2="725"/>
<line x1="1303" y1="636.5" x2="1307" y2="636.5"/>
<line x1="1303" y1="644.5" x2="1307" y2="644.5"/>
<line x1="1303" y1="653.5" x2="1307" y2="653.5"/>
<line x1="1303" y1="661.5" x2="1307" y2="661.5"/>
<line x1="1303" y1="670.5" x2="1307" y2="670.5"/>
<line x1="1300" y1="678.5" x2="1307" y2="678.5"/>
<line x1="1303" y1="687.5" x2="1307" y2="687.5"/>
<line x1="1303" y1="695.5" x2="1307" y2="695.5"/>
<line x1="1303" y1="703.5" x2="1307" y2="703.5"/>
<line x1="1303" y1="712.5" x2="1307" y2="712.5"/>
<line x1="1303" y1="720.5" x2="1307" y2="720.5"/>
</g>
<g font-family="DejaVu Sans, Liberation Sans, sans-serif" font-size="11px" fill="#1c1c50">
<rect x="1310" y="631" width="21" height="12" fill="#a0a0a0"/><text x="1310.5" y="640.2">100</text>
<rect x="1310" y="656" width="14" height="13" fill="#f66464"/><text x="1310.5" y="665.6">70</text>
<rect x="1310" y="673" width="14" height="13" fill="#a0a0a0"/><text x="1310.5" y="682.6">50</text>
<rect x="1310" y="690" width="14" height="13" fill="#f66464"/><text x="1310.5" y="699.6">30</text>
<rect x="1310" y="715" width="7" height="12" fill="#a0a0a0"/><text x="1310.5" y="724.7">0</text>
<rect x="1308" y="639" width="34" height="16" fill="#ff9900"/><text x="1310" y="650.7" fill="#000" textLength="31" lengthAdjust="spacingAndGlyphs">86,49</text>
</g>
</svg>
<div class="abs" id="title"><b>US30, m1</b><div class="wb" style="left:1301px"><i style="position:absolute;left:5px;top:11px;width:8px;height:2px;background:#9a9cba"></i></div><div class="wb" style="left:1321px"><i style="position:absolute;left:7px;top:4px;width:8px;height:7px;border:1px solid #9a9cba;border-top-width:2px"></i><i style="position:absolute;left:4px;top:7px;width:8px;height:7px;border:1px solid #9a9cba;border-top-width:2px;background:#d8d8e8"></i></div><div class="wb" style="left:1341px"><svg width="17" height="17" style="position:absolute;left:0;top:0"><path d="M5.5,6l6,6M11.5,6l-6,6" stroke="#9a9cba" stroke-width="2"/></svg></div></div>
<div class="abs" id="menu"><span style="left:8.1px">Fichier</span><span style="left:58.0px">Dispositions</span><span style="left:138.7px">Graphiques</span><span style="left:216.7px">Modeles</span><span style="left:276.2px">Insertion</span><span style="left:339.7px">Trading</span><span style="left:395.7px">Strategies</span><span style="left:466.7px">Aide</span></div>
<div class="abs" id="tbarea"></div>
<svg class="abs" style="left:0;top:0" width="1366" height="100" viewBox="0 0 1366 100">
<defs>
<linearGradient id="gTb" x1="0" y1="0" x2="0" y2="1"><stop offset="0" stop-color="#ffffff"/><stop offset=".3" stop-color="#fdfdfe"/><stop offset=".55" stop-color="#ebebf2"/><stop offset=".82" stop-color="#d3d3e1"/><stop offset="1" stop-color="#c8c8da"/></linearGradient>
<linearGradient id="gOr" x1="0" y1="0" x2="0" y2="1"><stop offset="0" stop-color="#fdb974"/><stop offset=".5" stop-color="#fbab58"/><stop offset=".52" stop-color="#f99e3c"/><stop offset="1" stop-color="#fba345"/></linearGradient>
<radialGradient id="gBall" cx=".36" cy=".34" r=".7"><stop offset="0" stop-color="#ffb696"/><stop offset=".3" stop-color="#ee4c1c"/><stop offset=".7" stop-color="#d43c10"/><stop offset="1" stop-color="#8a1c04"/></radialGradient>
<radialGradient id="gLens" cx=".4" cy=".35" r=".8"><stop offset="0" stop-color="#ffffff"/><stop offset="1" stop-color="#d6d6da"/></radialGradient>
<radialGradient id="gRadar" cx=".45" cy=".4" r=".7"><stop offset="0" stop-color="#6cc0f4"/><stop offset="1" stop-color="#2a8ae0"/></radialGradient>
<linearGradient id="gFade" x1="0" y1="0" x2="0" y2="1"><stop offset="0" stop-color="#fff" stop-opacity=".55"/><stop offset="1" stop-color="#fff" stop-opacity="1"/></linearGradient>
</defs>
<rect x="4" y="93" width="1150" height="2.5" fill="#b7b7cc" opacity=".55" rx="1"/>
<rect x="4" y="59" width="1149.5" height="34.5" rx="1.5" fill="url(#gTb)"/>
<rect x="4" y="92.5" width="1149.5" height="1.2" fill="#a2a2bd"/>
<g stroke="#d2d2e0" shape-rendering="crispEdges"><line x1="6.5" y1="72" x2="6.5" y2="81"/><line x1="8.5" y1="72" x2="8.5" y2="81"/><line x1="10.5" y1="72" x2="10.5" y2="81"/></g>
<line x1="14.5" y1="60" x2="14.5" y2="92" stroke="#e9e9f1" shape-rendering="crispEdges"/>
<rect x="19" y="66" width="74" height="21" fill="#fff"/><rect x="79" y="67" width="13.5" height="19" fill="#eaeaf1"/>
<path d="M82,76h7l-3.5,4z" fill="#000"/>
<text x="22.3" y="80.4" font-family="Liberation Sans, sans-serif" font-size="12px" fill="#1b0f3a" textLength="26.4" lengthAdjust="spacingAndGlyphs">US30</text>
<ellipse cx="114" cy="85.4" rx="6.4" ry="1.7" fill="#56606a" opacity=".42"/>
<circle cx="114" cy="77.5" r="7.2" fill="url(#gBall)"/>
<path d="M107.4,80.2q7.4,2.6 13.6,-5.4" fill="none" stroke="#7e1e04" stroke-width="2.6" opacity=".5"/>
<path d="M109.4,83q6.6,0.6 11.4,-5.4a7.2,7.2 0 0 1 -11.4,5.4z" fill="#ff5a28" opacity=".85"/>
<path d="M133.8,74.9h5.5l-2.8,3.3z" fill="#908ea9"/>
<rect x="145" y="66" width="85" height="21" fill="#fff"/><rect x="216" y="67" width="13.5" height="19" fill="#eaeaf1"/>
<path d="M219,76h7l-3.5,4z" fill="#000"/>
<text x="148.3" y="80.4" font-family="Liberation Sans, sans-serif" font-size="12px" fill="#1b0f3a" textLength="16.4" lengthAdjust="spacingAndGlyphs">m1</text>
<line x1="236" y1="61" x2="236" y2="91.5" stroke="#dddde8" shape-rendering="crispEdges"/><line x1="237" y1="61" x2="237" y2="91.5" stroke="#fbfbfe" shape-rendering="crispEdges"/>
<rect x="249.5" y="69.5" width="14" height="11.5" fill="#fff" stroke="#3f63c8" stroke-width="1"/><rect x="249" y="69" width="15" height="2.6" fill="#5c86e4"/>
<path d="M250.5,77l2,1.8l2.5,-3.2l1.5,-1" fill="none" stroke="#e81616" stroke-width="1.5"/><path d="M256.5,74.6l1.6,-1l2,3l1.4,1l1.6,-2.6" fill="none" stroke="#0c7a1c" stroke-width="1.5"/>
<rect x="249.5" y="82" width="14" height="5" fill="#8aa2e0" opacity=".22"/><path d="M251,84.5l2,-1.5M259,84.5l2,-1.5" stroke="#d88" stroke-width="1" opacity=".6"/>
<path d="M276.6,74.9h5.5l-2.8,3.3z" fill="#908ea9"/>
<line x1="287.5" y1="61" x2="287.5" y2="91.5" stroke="#dddde8" shape-rendering="crispEdges"/><line x1="288.5" y1="61" x2="288.5" y2="91.5" stroke="#fbfbfe" shape-rendering="crispEdges"/>
<rect x="292.5" y="61.5" width="32" height="30.5" fill="url(#gOr)" stroke="#c8952e" stroke-width="1"/>
<text x="301.3" y="77.8" font-family="DejaVu Sans Mono, Liberation Mono, monospace" font-size="8.9px" fill="#000" stroke="#000" stroke-width=".15" textLength="16.3" lengthAdjust="spacingAndGlyphs">Bid</text>
<rect x="301" y="81" width="16" height="2" fill="#1680f0"/>
<text x="335.5" y="77.8" font-family="DejaVu Sans Mono, Liberation Mono, monospace" font-size="8.9px" fill="#000" stroke="#000" stroke-width=".15" textLength="17" lengthAdjust="spacingAndGlyphs">Ask</text>
<rect x="336" y="81" width="16" height="2" fill="#f0522c"/>
<line x1="363.5" y1="61" x2="363.5" y2="91.5" stroke="#dddde8" shape-rendering="crispEdges"/><line x1="364.5" y1="61" x2="364.5" y2="91.5" stroke="#fbfbfe" shape-rendering="crispEdges"/>
<circle cx="382.6" cy="71.2" r="5.2" fill="url(#gLens)" stroke="#b4b4bc" stroke-width="1.2"/><path d="M386.20000000000005,75.4L391.6,80.60000000000001" stroke="#16161c" stroke-width="2.1" stroke-linecap="round"/><path d="M387.6,85.7l4,-3" stroke="#555" stroke-width="1.5" opacity=".25"/>
<circle cx="380.3" cy="78.6" r="3.4" fill="#1034c8"/><circle cx="379.7" cy="77.8" r="2.2" fill="#3a66ea" opacity=".6"/><path d="M378.3,78.6h4" stroke="#fff" stroke-width="1.3"/><path d="M380.3,76.6v4" stroke="#fff" stroke-width="1.3"/><ellipse cx="380.3" cy="85.0" rx="3.4" ry="2" fill="#3a5ad8" opacity=".28"/>
<circle cx="417.7" cy="71.2" r="5.2" fill="url(#gLens)" stroke="#b4b4bc" stroke-width="1.2"/><path d="M421.3,75.4L426.7,80.60000000000001" stroke="#16161c" stroke-width="2.1" stroke-linecap="round"/><path d="M422.7,85.7l4,-3" stroke="#555" stroke-width="1.5" opacity=".25"/>
<circle cx="415.4" cy="78.6" r="3.4" fill="#1034c8"/><circle cx="414.79999999999995" cy="77.8" r="2.2" fill="#3a66ea" opacity=".6"/><path d="M413.4,78.6h4" stroke="#fff" stroke-width="1.3"/><ellipse cx="415.4" cy="85.0" rx="3.4" ry="2" fill="#3a5ad8" opacity=".28"/>
<path d="M451.6,66.5l0,13l3,-2.6l2.2,4.6l1.8,-0.9l-2.2,-4.4l4,-0.3z" fill="#f2f2f4" stroke="#b0b0b8" stroke-width="1"/>
<circle cx="451.2" cy="78.6" r="3.4" fill="#1034c8"/><circle cx="450.59999999999997" cy="77.8" r="2.2" fill="#3a66ea" opacity=".6"/><path d="M449.2,78.6h4" stroke="#fff" stroke-width="1.3"/><path d="M451.2,76.6v4" stroke="#fff" stroke-width="1.3"/><ellipse cx="451.2" cy="85.0" rx="3.4" ry="2" fill="#3a5ad8" opacity=".28"/>
<path d="M483.3,73v11.4" stroke="#111" stroke-width="1"/><path d="M481.7,74.8l1.6,-2.6l1.6,2.6zM481.7,82.4l1.6,2.6l1.6,-2.6z" fill="#111"/>
<circle cx="490" cy="77.6" r="4" fill="#c4e4f6" stroke="#8a8a92" stroke-width="1.1"/><path d="M492.8,80.6l3,3" stroke="#c2501a" stroke-width="1.9" stroke-linecap="round"/>
<ellipse cx="489" cy="86" rx="8" ry="1.2" fill="#555" opacity=".18"/>
<path d="M509.8,74.9h5.5l-2.8,3.3z" fill="#908ea9"/>
<path d="M530,71.4h11M530,83.8h11" stroke="#111" stroke-width="1.1"/><path d="M535.5,72v11.6" stroke="#111" stroke-width="1"/>
<path d="M535.5,72.6l2.8,3.6h-1.6v3h1.6l-2.8,3.6l-2.8,-3.6h1.6v-3h-1.6z" fill="#35b828" stroke="#0f7a14" stroke-width=".6"/>
<ellipse cx="535.5" cy="86.2" rx="10" ry="1.2" fill="#555" opacity=".2"/>
<rect x="554.5" y="61.5" width="32" height="30.5" fill="url(#gOr)" stroke="#c8952e" stroke-width="1"/>
<rect x="563.8" y="68.5" width="14" height="12" fill="#fff" stroke="#4a72d8" stroke-width="1"/><rect x="563.3" y="68" width="15" height="2.6" fill="#4a7ae4"/>
<path d="M571.5,80.8l4.5,-3.6" stroke="#e8a820" stroke-width="2.2" stroke-linecap="round"/><circle cx="577.3" cy="75.8" r="2.7" fill="#f4c238" stroke="#d09010" stroke-width=".6"/>
<rect x="564" y="82.5" width="13.5" height="5" fill="#fff" opacity=".25"/>
<path d="M600,77.8q7,-6.4 14,0q-7,6.4 -14,0z" fill="#fff" stroke="#3c3c44" stroke-width="1"/><circle cx="607" cy="77.5" r="3.2" fill="#3c82f0"/><circle cx="606.4" cy="76.6" r="1.3" fill="#9cc6ff"/>
<path d="M602,71.2q5.5,-4.2 10.2,-0.6" fill="none" stroke="#0b1440" stroke-width="1.5"/><path d="M615.2,68.2l-0.4,5.6l-4.9,-2.6z" fill="#0b1440"/>
<ellipse cx="607" cy="85.5" rx="5" ry="1.3" fill="#6a8ad0" opacity=".25"/>
<circle cx="640.4" cy="75.3" r="7.4" fill="url(#gRadar)"/><g fill="none" stroke="#a8d8fa" stroke-width=".7" opacity=".8"><circle cx="640.4" cy="75.3" r="5"/><circle cx="640.4" cy="75.3" r="2.6"/></g><path d="M640.4,75.3l6.6,-3l0.6,5.6l-3,3.4z" fill="#bfe2fb" opacity=".75"/>
<ellipse cx="640.4" cy="86" rx="6" ry="1.6" fill="#4a9ae6" opacity=".28"/>
<line x1="660.5" y1="61" x2="660.5" y2="91.5" stroke="#dddde8" shape-rendering="crispEdges"/><line x1="661.5" y1="61" x2="661.5" y2="91.5" stroke="#fbfbfe" shape-rendering="crispEdges"/>
<g transform="rotate(-43 681 75.3)"><rect x="672.4" y="72.7" width="17.2" height="5.2" fill="#f5c44a" stroke="#c89a20" stroke-width=".8"/><path d="M675.4,72.7v2.4M678.6,72.7v2.4M681.8,72.7v2.4M685,72.7v2.4" stroke="#3a2a00" stroke-width=".8"/></g>
<path d="M701.5,74.9h5.5l-2.8,3.3z" fill="#908ea9"/>
<line x1="712.5" y1="61" x2="712.5" y2="91.5" stroke="#dddde8" shape-rendering="crispEdges"/><line x1="713.5" y1="61" x2="713.5" y2="91.5" stroke="#fbfbfe" shape-rendering="crispEdges"/>
<rect x="727" y="70" width="13.5" height="11" fill="#fff" stroke="#2a66d8" stroke-width="1.2"/><rect x="726.5" y="69.5" width="14.5" height="2" fill="#3a76e8"/><path d="M727.5,80.5v-3l3,-3.2l2.6,2.6l3,-3.4l3.9,4.2v2.8z" fill="#137a18"/>
<circle cx="728.4" cy="71.6" r="3.2" fill="#38a82a" stroke="#e8ffe0" stroke-width=".8"/><path d="M726.6,71.6h3.6M728.4,69.8v3.6" stroke="#fff" stroke-width="1.1"/>
<rect x="727" y="82" width="13.5" height="4.5" fill="#2a7a2a" opacity=".25"/>
<rect x="760.5" y="69.7" width="13" height="11.5" fill="#dfe8fb" stroke="#5a82e2" stroke-width="1"/><rect x="760" y="69.2" width="14" height="2.4" fill="#5a86ea"/>
<rect x="763.8" y="74.7" width="12.6" height="9.6" fill="#f6f8ff" stroke="#1a2a6a" stroke-width="1.1"/><path d="M761,78.3l2.5,-1l2.3,1.6l2.4,-2.2l2.4,1.8l2.6,-1.8l3,1.4" fill="none" stroke="#111" stroke-width="1"/>
<rect x="761" y="85.5" width="15" height="2.5" fill="#6a8ad0" opacity=".2"/>
<g stroke="#1c1c1c" stroke-width="1.15" fill="none"><path d="M797,82.5L807.6,72"/><path d="M799.4,74.3L805.5,80.7"/><path d="M799.4,74.3L804.6,68.4"/><path d="M805.5,80.7L810.8,74.6"/></g>
<path d="M797,87l2,-1.4M804.5,86.4l1.4,1" stroke="#999" stroke-width=".8" opacity=".5"/>
<path d="M823.6,74.9h5.5l-2.8,3.3z" fill="#908ea9"/>
<rect x="842" y="70.0" width="15.799999999999955" height="3" rx="1.5" fill="#44556c"/><circle cx="843.6" cy="71.5" r=".7" fill="#fff"/><circle cx="856.1999999999999" cy="71.5" r=".7" fill="#fff"/>
<rect x="842" y="75.0" width="15.799999999999955" height="3" rx="1.5" fill="#44556c"/><circle cx="843.6" cy="76.5" r=".7" fill="#fff"/><circle cx="856.1999999999999" cy="76.5" r=".7" fill="#fff"/>
<rect x="842" y="79.9" width="11" height="3" rx="1.5" fill="#44556c"/><circle cx="843.6" cy="81.4" r=".7" fill="#fff"/><circle cx="851.4" cy="81.4" r=".7" fill="#fff"/>
<text x="853.6" y="83.9" font-family="DejaVu Sans, Liberation Sans, sans-serif" font-size="6.6px" font-weight="bold" fill="#000" stroke="#fff" stroke-width="1.6" paint-order="stroke">F</text>
<path d="M869.8,74.9h5.5l-2.8,3.3z" fill="#908ea9"/>
<g stroke="#222" stroke-width="1" fill="none"><path d="M889.4,82.3l5.3,-12.3"/><path d="M889.4,82.3l11.6,-11.1"/><path d="M889.4,82.3l12.9,-4.9"/></g><circle cx="889.6" cy="82.2" r="1.2" fill="#222"/>
<path d="M889.5,84.5l6,2.6" stroke="#999" stroke-width=".8" opacity=".45"/>
<path d="M915.8,74.9h5.5l-2.8,3.3z" fill="#908ea9"/>
<path d="M935.6,82.5L946.4,71.7" stroke="#5a7a10" stroke-width="2.8" stroke-linecap="round"/><path d="M935.6,82.5L946.4,71.7" stroke="#9acc20" stroke-width="1.5" stroke-linecap="round"/><circle cx="935.5" cy="82.6" r="1.3" fill="#fff" stroke="#4a5a20" stroke-width=".8"/><circle cx="946.5" cy="71.6" r="1.3" fill="#fff" stroke="#4a5a20" stroke-width=".8"/>
<ellipse cx="942" cy="83.5" rx="6" ry="1" fill="#777" opacity=".2"/>
<path d="M961.6,74.9h5.5l-2.8,3.3z" fill="#908ea9"/>
<ellipse cx="987.8" cy="77" rx="8" ry="6.4" fill="#d3e3f6" stroke="#86ace2" stroke-width="1"/>
<path d="M1007.5,74.9h5.5l-2.8,3.3z" fill="#908ea9"/>
<text x="1025.4" y="75.6" font-family="DejaVu Sans Mono, Liberation Mono, monospace" font-size="8.2px" fill="#000" stroke="#000" stroke-width=".3" textLength="14.8" lengthAdjust="spacingAndGlyphs">ABC</text>
<circle cx="1036.4" cy="78.8" r="3.4" fill="#1034c8"/><circle cx="1035.8000000000002" cy="78.0" r="2.2" fill="#3a66ea" opacity=".6"/><path d="M1034.4,78.8h4" stroke="#fff" stroke-width="1.3"/><path d="M1036.4,76.8v4" stroke="#fff" stroke-width="1.3"/><ellipse cx="1036.4" cy="85.2" rx="3.4" ry="2" fill="#3a5ad8" opacity=".28"/>
<line x1="1053.5" y1="61" x2="1053.5" y2="91.5" stroke="#dddde8" shape-rendering="crispEdges"/><line x1="1054.5" y1="61" x2="1054.5" y2="91.5" stroke="#fbfbfe" shape-rendering="crispEdges"/>
<g transform="rotate(-40 1075 76.2)"><rect x="1066.5" y="72.4" width="18" height="7.6" rx="2.6" fill="#ececee" stroke="#b8b8c0" stroke-width=".8"/><path d="M1078,72.4h3.9a2.6,2.6 0 0 1 2.6,2.6v2.4a2.6,2.6 0 0 1 -2.6,2.6h-3.9z" fill="#f0859c"/></g>
<ellipse cx="1072" cy="83.6" rx="5" ry="1" fill="#777" opacity=".25"/>
<line x1="1094.5" y1="61" x2="1094.5" y2="91.5" stroke="#dddde8" shape-rendering="crispEdges"/><line x1="1095.5" y1="61" x2="1095.5" y2="91.5" stroke="#fbfbfe" shape-rendering="crispEdges"/>
<path d="M1115.5,74.5v4.5M1110.3,81v-2h10.5v2" fill="none" stroke="#4a7a00" stroke-width="1.1"/>
<rect x="1113" y="69.9" width="5" height="5" fill="#2a8af0" stroke="#1a6ad0" stroke-width=".6"/><rect x="1114" y="71" width="2" height="1.6" fill="#bfe0ff"/>
<rect x="1108.5" y="80" width="3.6" height="3.6" fill="#8cba1c" stroke="#4a7a00" stroke-width=".8"/>
<rect x="1113.7" y="80" width="3.6" height="3.6" fill="#8cba1c" stroke="#4a7a00" stroke-width=".8"/>
<rect x="1119.0" y="80" width="3.6" height="3.6" fill="#8cba1c" stroke="#4a7a00" stroke-width=".8"/>
<line x1="1133.5" y1="61" x2="1133.5" y2="91.5" stroke="#dddde8" shape-rendering="crispEdges"/><line x1="1134.5" y1="61" x2="1134.5" y2="91.5" stroke="#fbfbfe" shape-rendering="crispEdges"/>
<path d="M1140,72.5h7M1140,75.5h7M1140,78.5h4" stroke="#8a8aa8" stroke-width="1"/><path d="M1143.6,79.2h5l-2.5,2.8z" fill="#8a8aa8"/>
</svg>
<div class="abs" id="frameT"></div><div class="abs" id="frameL"></div><div class="abs" id="frameR"></div>
<svg class="abs" style="left:80px;top:545px" width="290" height="184" viewBox="80 545 290 184">
<defs><linearGradient id="gThT" x1="0" y1="0" x2="0" y2="1"><stop offset="0" stop-color="#9aa0aa" stop-opacity=".0"/><stop offset=".5" stop-color="#cfd4dc" stop-opacity=".75"/><stop offset="1" stop-color="#f2f4f8"/></linearGradient>
<linearGradient id="gWi" x1="0" y1="0" x2=".4" y2="1"><stop offset="0" stop-color="#6f9fe8"/><stop offset=".3" stop-color="#c4daf8"/><stop offset=".62" stop-color="#ffffff"/><stop offset="1" stop-color="#d4e2fa"/></linearGradient>
<filter id="fSh" x="-10%" y="-10%" width="120%" height="130%"><feGaussianBlur stdDeviation="2.2"/></filter></defs>
<rect x="92.5" y="555.5" width="262" height="19.5" fill="#000" opacity=".28" filter="url(#fSh)"/>
<rect x="90.5" y="553.5" width="261.5" height="19" fill="#fff" stroke="#767676" stroke-width="1"/>
<text x="96.5" y="567" font-family="Liberation Sans, sans-serif" font-size="12px" fill="#575757" textLength="248" lengthAdjust="spacingAndGlyphs">Lettre de motivation SHERCO - Microsoft Word</text>
<rect x="111" y="581" width="220" height="150" fill="#000" opacity=".22" filter="url(#fSh)"/>
<rect x="113" y="581" width="215" height="148" fill="#4a4a4a"/>
<rect x="121.5" y="589.5" width="15" height="15" rx=".8" fill="url(#gWi)" stroke="#2f62c4" stroke-width="1"/>
<path d="M122.3,600h10.4v4h-10.4z" fill="#fff" opacity=".95"/>
<text x="123.8" y="600.2" font-family="Liberation Sans, sans-serif" font-size="10.4px" font-weight="bold" fill="#1848b4" stroke="#1848b4" stroke-width=".4" textLength="9.8" lengthAdjust="spacingAndGlyphs">W</text>
<path d="M132.8,598.2l3.6,-1.2l0.3,4.4l-3.2,1.1z" fill="#f4f7ff" stroke="#a8bce6" stroke-width=".4"/>
<text x="145" y="601.4" font-family="Liberation Sans, sans-serif" font-size="12px" fill="#ffffff" textLength="174.5" lengthAdjust="spacingAndGlyphs">Lettre de motivation SHERCO - ...</text>
<rect x="121" y="614.4" width="199" height="4" fill="url(#gThT)"/>
<rect x="121" y="618" width="199" height="15" fill="#f3f5f9"/>
<rect x="121" y="618" width="8.4" height="3" fill="#2b5cb8"/>
<rect x="129.4" y="618" width="190.6" height="3" fill="#e6eaf1"/><rect x="130" y="618.3" width="8" height="2.7" fill="#fbfcfe"/>
<g opacity=".75">
<rect x="123" y="622" width="2.6" height="6.6" fill="#e9c66a"/><rect x="127" y="622.6" width="7" height=".8" fill="#aab"/><rect x="127" y="625" width="6" height=".8" fill="#aab"/><rect x="127" y="627.6" width="24" height=".9" fill="#c9b27a"/>
<rect x="154" y="623.4" width="54" height="1.3" fill="#9fb0cc"/><rect x="154" y="627.4" width="22" height="1.3" fill="#8f9fbd"/><rect x="176.5" y="626.6" width="3" height="2.6" fill="#f2c31a"/><rect x="181" y="627.2" width="3.4" height="1.6" fill="#d04020"/><rect x="193.6" y="626.4" width="3.6" height="3" fill="#f4c81c"/><rect x="198.6" y="627.4" width="9" height="1.4" fill="#444"/><rect x="211" y="627" width="5" height="1.6" fill="#8f9fbd"/>
<rect x="228" y="623.6" width="8.4" height="1.8" fill="#777" opacity=".7"/><rect x="229" y="627.6" width="6" height=".9" fill="#9aa"/>
<rect x="238" y="623.6" width="8.4" height="1.8" fill="#777" opacity=".7"/><rect x="239" y="627.6" width="6" height=".9" fill="#9aa"/>
<rect x="249" y="623.6" width="8.4" height="1.8" fill="#3a6ac8" opacity=".7"/><rect x="250" y="627.6" width="6" height=".9" fill="#9aa"/>
<rect x="259.6" y="623.6" width="8.4" height="1.8" fill="#3a8ad8" opacity=".7"/><rect x="260.6" y="627.6" width="6" height=".9" fill="#9aa"/>
<rect x="270" y="623.6" width="8.4" height="1.8" fill="#3a5a9a" opacity=".7"/><rect x="271" y="627.6" width="6" height=".9" fill="#9aa"/>
<rect x="280.6" y="623.6" width="8.4" height="1.8" fill="#3a9ad8" opacity=".7"/><rect x="281.6" y="627.6" width="6" height=".9" fill="#9aa"/>
<rect x="294" y="621.6" width="4" height="7" fill="#b9a0d8"/><rect x="303" y="622.4" width="12" height="1" fill="#6a8ac8"/><rect x="303" y="625.2" width="9" height="1" fill="#8a9ab8"/><rect x="303" y="628" width="10" height="1" fill="#8a9ab8"/>
<rect x="131" y="631" width="12" height=".7" fill="#aab"/><rect x="170" y="631" width="6" height=".7" fill="#aab"/><rect x="204" y="631" width="9" height=".7" fill="#aab"/><rect x="258" y="631" width="5" height=".7" fill="#aab"/><rect x="305" y="631" width="9" height=".7" fill="#aab"/>
</g>
<rect x="121" y="633" width="199" height="84" fill="#acb0b7"/>
<rect x="317" y="635" width="3" height="82" fill="#cfd3da"/>
<rect x="161.8" y="637.3" width="115.2" height="79.7" fill="#ffffff"/>
<rect x="174.9" y="651" width="88.8" height="62" fill="#f4f2ed"/>
<g stroke="#2f86b8" stroke-width="1.3" opacity=".62" fill="none">
<path d="M175,652.2H196.6" stroke-dasharray="2.6 .5 1.2 .5 3.1 .6 1.8 .5" stroke-dashoffset="0.0"/>
<path d="M175,657.2H259.7" stroke-dasharray="1.4 .5 3.4 .6 2.2 .5 1 .5 2.8 .6" stroke-dashoffset="1.7"/>
<path d="M175,660.0H253.0" stroke-dasharray="3 .6 1.6 .5 2.4 .5 1.2 .6 3.6 .5" stroke-dashoffset="3.4"/>
<path d="M175,665.2H259.0" stroke-dasharray="2 .5 2.8 .6 1.2 .5 3.2 .6 1.8 .5" stroke-dashoffset="5.1"/>
<path d="M175,667.8H217.0" stroke-dasharray="2.6 .5 1.2 .5 3.1 .6 1.8 .5" stroke-dashoffset="6.8"/>
<path d="M175,673.0H259.7" stroke-dasharray="1.4 .5 3.4 .6 2.2 .5 1 .5 2.8 .6" stroke-dashoffset="8.5"/>
<path d="M175,675.6H259.7" stroke-dasharray="3 .6 1.6 .5 2.4 .5 1.2 .6 3.6 .5" stroke-dashoffset="10.2"/>
<path d="M175,678.3H253.0" stroke-dasharray="2 .5 2.8 .6 1.2 .5 3.2 .6 1.8 .5" stroke-dashoffset="11.9"/>
<path d="M175,680.8H187.0" stroke-dasharray="2.6 .5 1.2 .5 3.1 .6 1.8 .5" stroke-dashoffset="13.6"/>
<path d="M175,686.1H246.5" stroke-dasharray="1.4 .5 3.4 .6 2.2 .5 1 .5 2.8 .6" stroke-dashoffset="15.3"/>
<path d="M175,688.8H259.7" stroke-dasharray="3 .6 1.6 .5 2.4 .5 1.2 .6 3.6 .5" stroke-dashoffset="17.0"/>
<path d="M175,691.4H259.0" stroke-dasharray="2 .5 2.8 .6 1.2 .5 3.2 .6 1.8 .5" stroke-dashoffset="18.7"/>
<path d="M175,694.0H188.0" stroke-dasharray="2.6 .5 1.2 .5 3.1 .6 1.8 .5" stroke-dashoffset="20.4"/>
<path d="M175,699.0H259.7" stroke-dasharray="1.4 .5 3.4 .6 2.2 .5 1 .5 2.8 .6" stroke-dashoffset="22.1"/>
<path d="M175,701.9H241.8" stroke-dasharray="3 .6 1.6 .5 2.4 .5 1.2 .6 3.6 .5" stroke-dashoffset="23.8"/>
<path d="M175,706.9H228.5" stroke-dasharray="2 .5 2.8 .6 1.2 .5 3.2 .6 1.8 .5" stroke-dashoffset="25.5"/>
<path d="M175,711.9H197.0" stroke-dasharray="2.6 .5 1.2 .5 3.1 .6 1.8 .5" stroke-dashoffset="27.2"/>
</g>
<rect x="121" y="717" width="199" height="3" fill="#c9cdd5"/><rect x="280" y="717.6" width="3" height="2" fill="#e8c050"/>
</svg>
<svg class="abs" style="left:0;top:726px" width="1366" height="42" viewBox="0 726 1366 42">
<defs>
<linearGradient id="gOut" x1="0" y1="0" x2="1" y2="1"><stop offset="0" stop-color="#fbd866"/><stop offset=".5" stop-color="#f7b52a"/><stop offset="1" stop-color="#ee9410"/></linearGradient>
<linearGradient id="gXl" x1="0" y1="0" x2="1" y2="1"><stop offset="0" stop-color="#e4f2da"/><stop offset=".45" stop-color="#7cc068"/><stop offset="1" stop-color="#2a8434"/></linearGradient>
<linearGradient id="gWd2" x1="0" y1="0" x2=".4" y2="1"><stop offset="0" stop-color="#6f9fe8"/><stop offset=".3" stop-color="#c4daf8"/><stop offset=".62" stop-color="#ffffff"/><stop offset="1" stop-color="#d4e2fa"/></linearGradient><linearGradient id="gWd" x1="0" y1="0" x2="0" y2="1"><stop offset="0" stop-color="#e6eefc"/><stop offset=".6" stop-color="#ffffff"/><stop offset="1" stop-color="#c6d6f6"/></linearGradient>
<radialGradient id="gKp" cx=".4" cy=".3" r=".8"><stop offset="0" stop-color="#ffffff"/><stop offset=".55" stop-color="#b9c8f6"/><stop offset="1" stop-color="#5a78dc"/></radialGradient>
<linearGradient id="gZ" x1="0" y1="0" x2="1" y2="1"><stop offset="0" stop-color="#4aa6ea"/><stop offset=".5" stop-color="#1e6cc4"/><stop offset="1" stop-color="#0f4690"/></linearGradient>
</defs>
<rect x="0" y="727" width="1366" height="41" fill="#141515"/>
<rect x="197" y="727" width="48" height="41" fill="#2d2d2d"/>
<rect x="491" y="727" width="44" height="41" fill="#454545"/><rect x="535" y="727" width="4" height="41" fill="#3a3a3a"/>
<rect x="197" y="766" width="48" height="2" fill="#82c3f2"/>
<rect x="299" y="766" width="40" height="2" fill="#82c3f2"/>
<rect x="446" y="766" width="40" height="2" fill="#82c3f2"/>
<rect x="491" y="766" width="48" height="2" fill="#82c3f2"/>
<path d="M15.4,742.1l6.8,-1v6.4h-6.8zM23.2,741l9.2,-1.3v7.8h-9.2zM15.4,748.5h6.8v6.4l-6.8,-1zM23.2,748.5h9.2v7.8l-9.2,-1.3z" fill="#fff"/>
<circle cx="74.4" cy="745.8" r="5.2" fill="none" stroke="#fff" stroke-width="1.5"/><path d="M70.7,749.6l-6.4,6" stroke="#fff" stroke-width="1.6" stroke-linecap="round"/>
<rect x="111" y="736" width="22" height="22" rx="1.5" fill="url(#gOut)"/>
<path d="M117.4,753.4l9,-4.6l6.6,2.4v5.3l-1,1h-14.6z" fill="#fdf3d6" opacity=".95"/><path d="M118,753.6l8,3l7,-4.6" fill="none" stroke="#f2b64a" stroke-width=".8"/>
<ellipse cx="119.4" cy="744.8" rx="4.3" ry="5.3" fill="none" stroke="#e9800a" stroke-width="3.5"/>
<circle cx="130" cy="745.3" r="2.9" fill="#fdf3d0" stroke="#f0a020" stroke-width=".7"/><path d="M129.2,744.2l1,1.4l1.2,-0.8" fill="none" stroke="#d83a1a" stroke-width=".7"/>
<path d="M162,748.2c0.6,-6.2 5.2,-10.8 10.6,-10.8c6,0 9.7,4.6 9.6,11.6h-13.4c0.3,3.2 2.6,5 6,5c2.6,0 4.6,-0.7 6.6,-1.9v4.4c-2.2,1.2 -4.8,1.9 -7.8,1.9c-6.4,0 -10.2,-4.2 -10.2,-9.4c0,-3.6 1.8,-6.6 5,-8.2c-1.4,1.4 -2.2,3.2 -2.5,5.2h9.8c-0.2,-2.6 -1.8,-4.2 -4.4,-4.2c-3.6,0 -7,2.2 -9.3,6.4z" fill="#0b84ea"/>
<rect x="209.3" y="736.3" width="21.4" height="21.4" rx="1" fill="url(#gWd2)" stroke="#2a56b4" stroke-width="1.1"/>
<path d="M210,751.5h15v5.6h-15z" fill="#fff" opacity=".95"/><path d="M211.5,753h10M211.5,755h8" stroke="#9cb8ec" stroke-width=".8"/>
<text x="212.6" y="751.2" font-family="Liberation Sans, sans-serif" font-size="14.5px" font-weight="bold" fill="#1848b4" stroke="#1848b4" stroke-width=".5" textLength="13.8" lengthAdjust="spacingAndGlyphs">W</text>
<path d="M225.4,748.6l5.4,-1.8l0.4,6.2l-4.6,1.6z" fill="#f4f7ff" stroke="#a8bce6" stroke-width=".5"/>
<rect x="258.3" y="736.3" width="21.4" height="21.4" rx="1.5" fill="url(#gXl)" stroke="#2a7a2a" stroke-width=".8"/>
<path d="M259,752.6h14v4.6h-14z" fill="#fff" opacity=".9"/>
<path d="M262.4,740l9.6,12.4" stroke="#1c6a2c" stroke-width="3"/><path d="M272,740l-9.6,12.4" stroke="#7cc64e" stroke-width="3"/>
<path d="M270.6,748.4l9.2,-2.4l0.6,7l-7.6,3z" fill="#f2f8ee" stroke="#9cc89a" stroke-width=".5"/><path d="M272.4,750.2l6,-1.6M272.8,752.2l6,-1.8M273.4,754.2l5,-1.8" stroke="#7ab87a" stroke-width=".6"/>
<circle cx="318.9" cy="747.7" r="11.2" fill="#fcc934"/>
<path d="M318.9,747.7L309.20,742.10A11.2,11.2 0 0 1 328.60,742.10z" fill="#e2473a"/>
<path d="M309.20,742.10A11.2,11.2 0 0 0 317.92,758.86L318.9,747.7z" fill="#22a05a"/>
<path d="M318.9,747.7L328.60,742.10h-9z" fill="#e2473a"/>
<path d="M318.9,747.7L317.92,758.86L321.5,752.1z" fill="#22a05a"/>
<circle cx="318.9" cy="747.7" r="5.2" fill="#fff"/><circle cx="318.9" cy="747.7" r="4.1" fill="#4a8df6"/>
<ellipse cx="368.3" cy="746.9" rx="9.4" ry="9.8" fill="none" stroke="#ff9c0a" stroke-width="1.9"/><path d="M361.6,753.2l-3.8,2.8l6,-0.2" fill="#ff9c0a" stroke="#ff9c0a" stroke-width="1.4" stroke-linejoin="round"/><path d="M359.6,744.6l8.6,4.6l8.8,-4.6" fill="none" stroke="#ff9c0a" stroke-width="1.9"/>
<circle cx="417.2" cy="747.7" r="11" fill="#0a0a14"/><circle cx="417.2" cy="747.7" r="10" fill="url(#gKp)"/>
<path d="M413.6,746v-2.4a3.6,3.6 0 0 1 7.2,0v2.4" fill="none" stroke="#0c0c18" stroke-width="1.8"/><rect x="411.4" y="746" width="11.6" height="8" fill="#0c0c18"/><path d="M411.4,748.6h11.6M411.4,750.6h11.6M411.4,752.6h11.6" stroke="#7a90e0" stroke-width=".6"/><rect x="416.4" y="748" width="1.6" height="2.6" fill="#dfe6ff"/>
<path d="M455.4,740.2a1,1 0 0 1 1,-1h5.6l1.4,1.6h12.2a1,1 0 0 1 1,1v13.4h-21.2z" fill="#ffe796"/><rect x="456.4" y="740" width="5" height="1.2" fill="#3ea8e8"/><path d="M455.4,742.2h21.2v13h-21.2z" fill="#fde58e"/>
<path d="M459,756.2v-7a1,1 0 0 1 1,-1h11.6a1,1 0 0 1 1,1v7h-3.6v-4.6h-6.4v4.6z" fill="#2da6ee"/>
<rect x="504" y="736.8" width="21.2" height="19.2" fill="url(#gZ)"/>
<path d="M509,743.2c2.6,-3 6.6,-3.4 9.6,-2l1.6,-1.6l0.4,5.4l-4.8,4.2c3,-0.2 4.4,-1 5.4,-2.2c-0.4,3.4 -4,6.4 -9,5.4l-2.4,1l0.6,-4.6l5.4,-4.8c-2.4,-0.4 -4.8,-0.6 -6.8,-0.8z" fill="#fff" opacity=".93"/>
<path d="M1145.2,750.6l6,-6l6,6" fill="none" stroke="#fff" stroke-width="1.3"/>
<rect x="1168.3" y="744.3" width="13.4" height="8.4" fill="none" stroke="#fff" stroke-width="1.2"/><rect x="1170.2" y="746.2" width="8" height="4.6" fill="#fff"/><rect x="1182.2" y="746.6" width="1.3" height="3.8" fill="#fff"/>
<path d="M1191.5,746.3h2.5l3.5,-3.3v11l-3.5,-3.3h-2.5z" fill="none" stroke="#fff" stroke-width="1.1" stroke-linejoin="round"/><path d="M1199.6,746.2a3.4,3.4 0 0 1 0,4.6" fill="none" stroke="#fff" stroke-width="1"/><path d="M1201.8,744.2a6.2,6.2 0 0 1 0,8.6" fill="none" stroke="#aaa" stroke-width="1"/><path d="M1204,742.3a9,9 0 0 1 0,12.4" fill="none" stroke="#666" stroke-width="1"/>
<rect x="1215.6" y="741.6" width="22" height="12.4" rx="1" fill="none" stroke="#fff" stroke-width="1.2"/><path d="M1218,744.5h17.4M1218,747h17.4" stroke="#fff" stroke-width="1" stroke-dasharray="1.3 1"/><path d="M1220,750.8h13" stroke="#fff" stroke-width="1.1"/><path d="M1217.6,750.8h1.4M1234,750.8h1.4" stroke="#fff" stroke-width="1.1"/>
<text x="1277.5" y="743" text-anchor="middle" font-family="Liberation Sans, sans-serif" font-size="12px" fill="#fff" textLength="27.5" lengthAdjust="spacingAndGlyphs">22:29</text>
<text x="1278" y="760.5" text-anchor="middle" font-family="Liberation Sans, sans-serif" font-size="12px" fill="#fff" textLength="58.5" lengthAdjust="spacingAndGlyphs">09/07/2019</text>
<path d="M1325,740h16.3v11.6h-12l-2.6,3v-3h-1.7z" fill="#fff"/><path d="M1328,743h10.4M1328,745.6h10.4M1328,748.2h7" stroke="#131313" stroke-width=".9"/>
<circle cx="1340.4" cy="755" r="8" fill="#131313"/><circle cx="1340.4" cy="755" r="6.9" fill="#3e3e3e" stroke="#8a8a8a" stroke-width=".6"/>
<text x="1340.4" y="759" text-anchor="middle" font-family="Liberation Sans, sans-serif" font-size="10.5px" font-weight="bold" fill="#fff">1</text>
<rect x="1361" y="728" width="1" height="40" fill="#5a5a5a"/>
</svg>
</body></html>
